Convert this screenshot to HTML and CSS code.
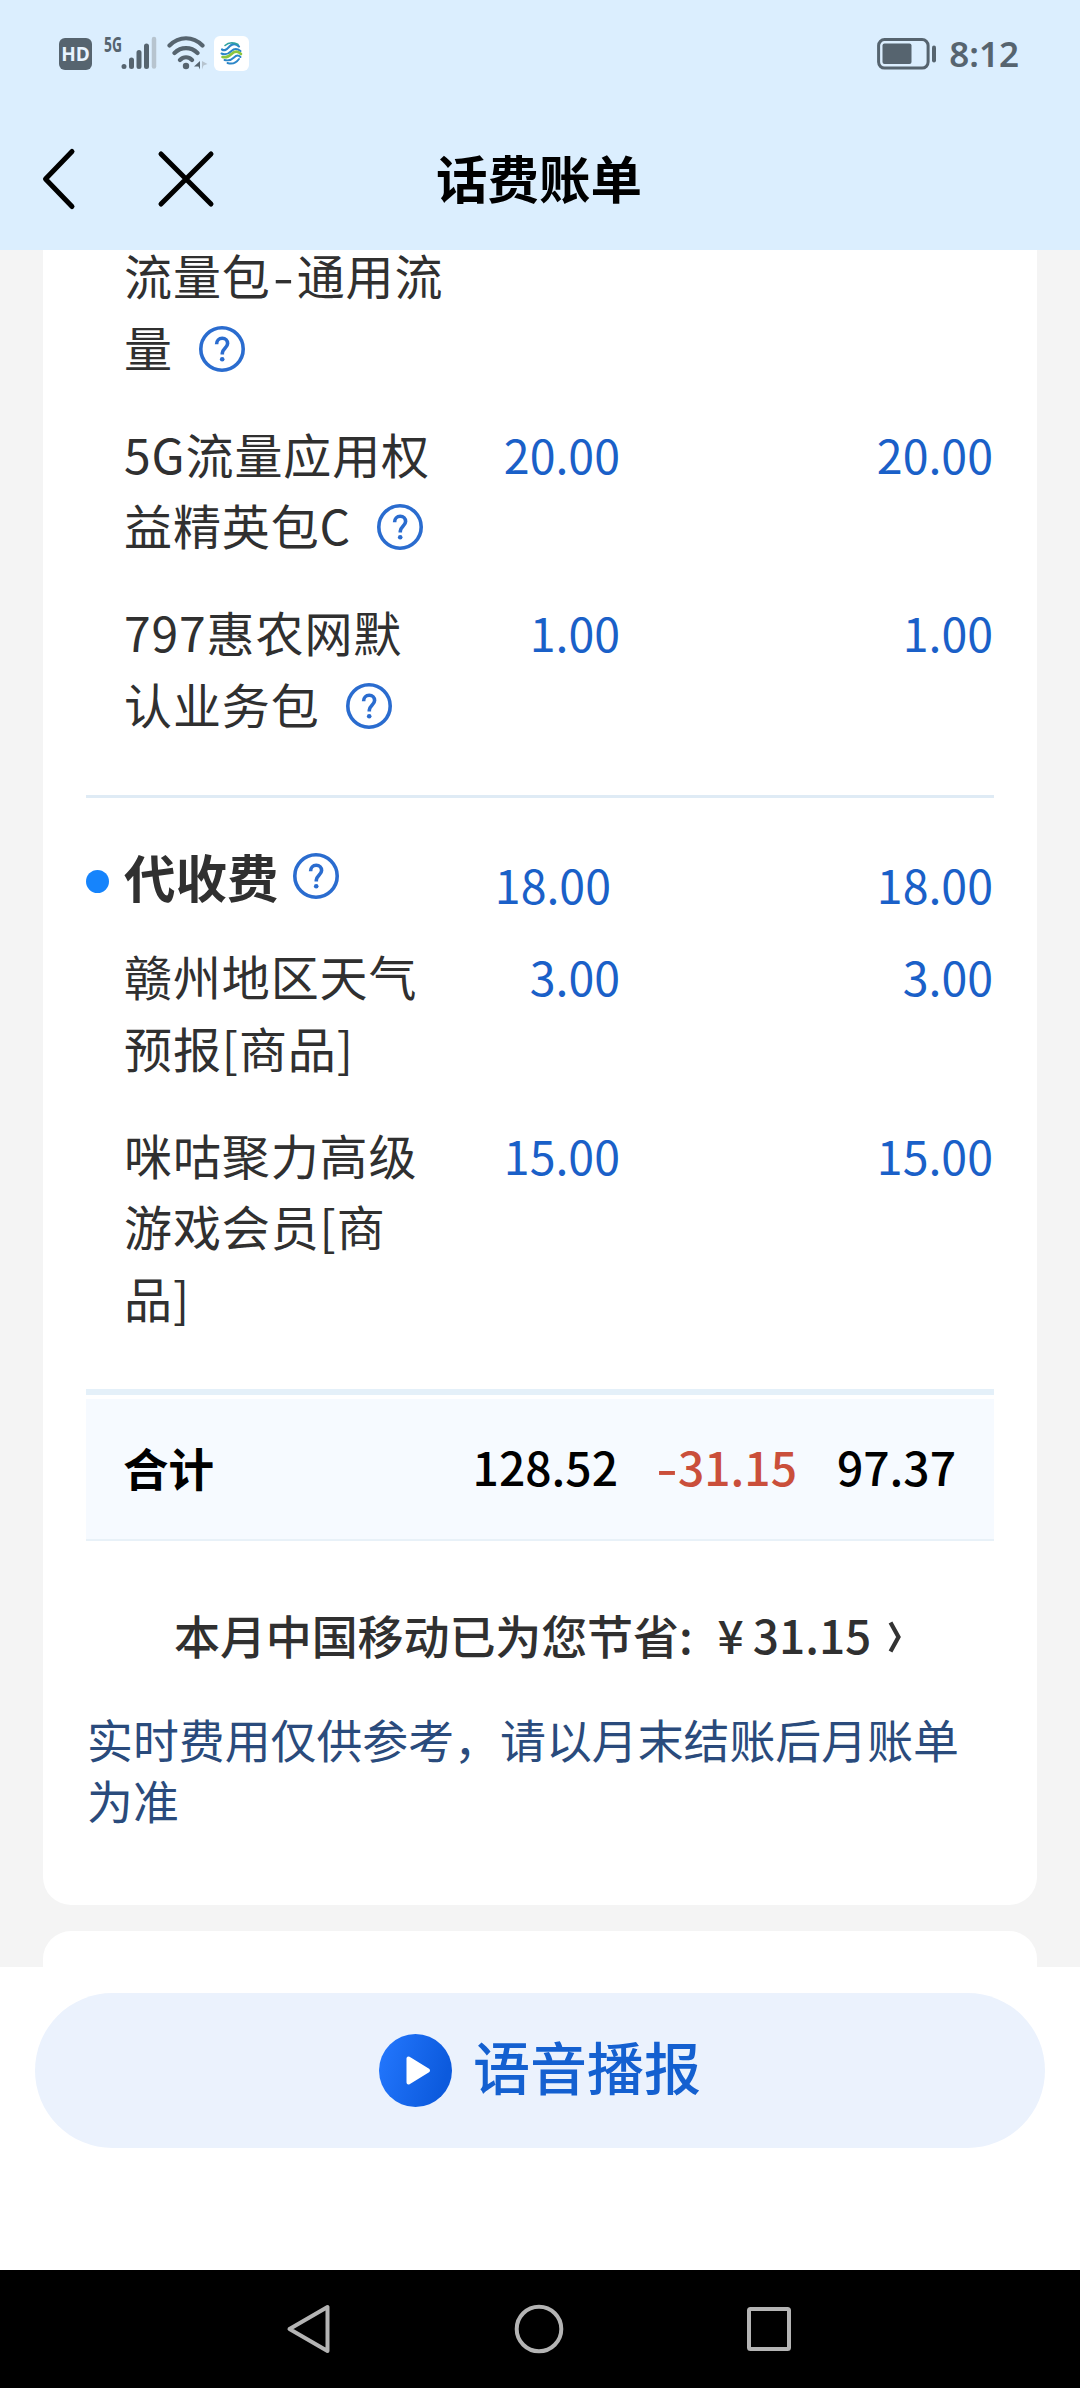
FILE: index.html
```html
<!DOCTYPE html>
<html lang="zh-CN">
<head>
<meta charset="utf-8">
<title>话费账单</title>
<link rel="stylesheet" href="styles.css">
</head>
<body>
<svg width="0" height="0" class="defs">
  <symbol id="help" viewBox="0 0 46 46">
    <circle cx="23" cy="23" r="21.200" fill="none" stroke="#2a6ccf" stroke-width="3.600"/>
    <path d="M17.600 18.200c0-3.600 2.400-5.900 5.600-5.900s5.400 2.200 5.400 5.200c0 4.400-5.300 5-5.300 9.600v1.400" fill="none" stroke="#2a6ccf" stroke-width="3.600"/>
    <circle cx="23.200" cy="33.200" r="2.300" fill="#2a6ccf"/>
  </symbol>
</svg>
<div class="screen">
  <header class="top">
    <div class="status">
      <div class="status-left">
        <span class="hd">HD</span>
        <span class="net">5G</span>
        <svg class="signal" width="36" height="34" viewBox="0 0 36 34" stroke-linecap="round" stroke-width="5" stroke="#56646f">
          <path d="M3 30.400v.1M10.500 24v6.500M18 16.500v14M25.500 10v20.500"/>
          <path d="M33 3v27.500" stroke="#b7c4cf" stroke-width="4.500"/>
        </svg>
        <svg class="wifi" width="41" height="34" viewBox="0 0 41 34" fill="none" stroke="#56646f" stroke-width="4.200" stroke-linecap="round">
          <path d="M2.500 9.500C12-.2 26-.2 35.500 9.500M7.500 17c6.500-6.500 16.500-6.500 23 0M13 24c3.500-3.500 8.500-3.500 12 0"/>
          <circle cx="19" cy="30" r="3.200" fill="#56646f" stroke="none"/>
          <path d="M33 25v8.500l-1.500-3h-4.500z" fill="#56646f" stroke="none"/>
          <path d="M35 25v8.500l1.500-4 4-1.500z" fill="#b7c4cf" stroke="none"/>
        </svg>
        <svg class="app" width="35" height="35" viewBox="0 0 35 35" fill="none" stroke-linecap="round">
          <rect width="35" height="35" rx="6" fill="#fff"/>
          <path d="M8 13.500c3 2 5-.5 8-3.500s6-2.500 9 .5" stroke="#2c86c8" stroke-width="2.200"/>
          <path d="M11 9.500c4-4 10-3 13-1" stroke="#2fa3a0" stroke-width="1.600"/>
          <path d="M7.500 17.500c4 2 7 .5 10-2.500s6-2.500 9 0" stroke="#2c86c8" stroke-width="2"/>
          <path d="M8.500 21c4 1 6 0 9-3s6.500-3 9.500 0" stroke="#8cc63f" stroke-width="2.600"/>
          <path d="M10.500 24c4 1 7 0 9.500-2.500s4.500-2.500 6.500-.5M13.500 27c5 1.500 9-.5 11.500-4" stroke="#2c86c8" stroke-width="1.900"/>
        </svg>
      </div>
      <div class="status-right">
        <svg width="60" height="32" viewBox="0 0 60 32">
          <rect x="1.600" y="1.600" width="49.500" height="28.500" rx="6" fill="none" stroke="#56646f" stroke-width="3"/>
          <rect x="5.500" y="5.500" width="29" height="20.500" rx="2" fill="#56646f"/>
          <rect x="55" y="7.500" width="4" height="17" rx="2" fill="#56646f"/>
        </svg>
        <span class="time">8:12</span>
      </div>
    </div>
    <nav class="titlebar">
      <svg class="back" width="34" height="64" viewBox="0 0 34 64" fill="none" stroke="#000" stroke-width="5" stroke-linecap="round" stroke-linejoin="round"><path d="M30 4.500 3.500 32 30 59.500"/></svg>
      <svg class="close" width="58" height="58" viewBox="0 0 58 58" fill="none" stroke="#000" stroke-width="5" stroke-linecap="round"><path d="M4 4l50 50M54 4 4 54"/></svg>
      <h1>话费账单</h1>
    </nav>
  </header>

  <main class="content">
    <section class="card bill">
      <div class="row first">
        <div class="label">流量包<span class="dash">-</span>通用流<br>量<svg class="help"><use href="#help"/></svg></div>
      </div>
      <div class="row">
        <div class="label">5G流量应用权<br>益精英包C<svg class="help"><use href="#help"/></svg></div>
        <div class="amount">20.00</div>
        <div class="amount">20.00</div>
      </div>
      <div class="row">
        <div class="label">797惠农网默<br>认业务包<svg class="help"><use href="#help"/></svg></div>
        <div class="amount">1.00</div>
        <div class="amount">1.00</div>
      </div>
      <div class="group">
        <h2><i class="dot"></i>代收费<svg class="help"><use href="#help"/></svg></h2>
        <div class="amount">18.00</div>
        <div class="amount">18.00</div>
      </div>
      <div class="row">
        <div class="label">赣州地区天气<br>预报[商品]</div>
        <div class="amount">3.00</div>
        <div class="amount">3.00</div>
      </div>
      <div class="row last">
        <div class="label">咪咕聚力高级<br>游戏会员[商<br>品]</div>
        <div class="amount">15.00</div>
        <div class="amount">15.00</div>
      </div>
      <div class="total">
        <b>合计</b>
        <span>128.52</span>
        <span class="minus"><span class="sign">-</span>31.15</span>
        <span>97.37</span>
      </div>
      <div class="saving">
        <span class="text">本月中国移动已为您节省:</span>
        <span class="yen">¥</span>
        <span class="sum">31.15</span>
        <svg width="15" height="34" viewBox="0 0 15 34" fill="none" stroke="#333" stroke-width="4.200"><path d="M2.500 2.500 10.500 17 2.500 31.500"/></svg>
      </div>
      <p class="note">实时费用仅供参考，请以月末结账后月账单<br>为准</p>
    </section>
    <section class="card next"></section>
  </main>

  <footer class="action">
    <button class="play">
      <svg width="73" height="73" viewBox="0 0 73 73">
        <defs><linearGradient id="g" x1="0" y1="0" x2="1" y2=".3"><stop offset="0" stop-color="#2478ff"/><stop offset="1" stop-color="#0c5add"/></linearGradient></defs>
        <circle cx="36.500" cy="36.500" r="36.500" fill="url(#g)"/>
        <path d="M29.500 24.500v24L49 36.500z" fill="#fff" stroke="#fff" stroke-width="4" stroke-linejoin="round"/>
      </svg>
      <span>语音播报</span>
    </button>
  </footer>

  <div class="sysnav">
    <svg width="46" height="50" viewBox="0 0 46 50"><path d="M41.500 3v44L3.500 25z"/></svg>
    <svg width="50" height="50" viewBox="0 0 50 50"><circle cx="25" cy="25" r="22.300"/></svg>
    <svg width="46" height="50" viewBox="0 0 46 50"><rect x="3" y="5" width="40" height="40" rx="1.500"/></svg>
  </div>
</div>
</body>
</html>
```
FILE: styles.css
```css
* { box-sizing: border-box; margin: 0; padding: 0; }
body {
  width: 1080px;
  background: #fff;
  color: #303030;
  font-family: "Noto Sans CJK SC", sans-serif;
}
svg { display: block; flex: none; }
.defs { position: absolute; }
.screen { display: flex; flex-direction: column; height: 2388px; }

.top { flex: none; height: 250px; background: #dbeefe; }
.status { display: flex; justify-content: space-between; align-items: flex-start; height: 108px; padding: 36px 61px 0 59px; color: #56646f; }
.status-left, .status-right { display: flex; align-items: flex-start; }
.hd {
  width: 33px; height: 32px; margin-top: 2px; border-radius: 6px;
  background: #56646f; color: #e8f4ff;
  font: 700 19px/32px "Open Sans", sans-serif; text-align: center;
}
.net { width: 17px; margin-left: 12px; font: 700 21px/16px "Open Sans", sans-serif; transform: scaleX(.66); transform-origin: 0 0; }
.wifi { margin-left: 10px; }
.app { margin-left: 6px; }
.status-right svg { margin-top: 2px; }
.time { margin-left: 12px; font: 600 35px/36px "Noto Sans", sans-serif; }

.titlebar { display: flex; align-items: center; height: 142px; padding-left: 42px; }
.close { margin-left: 81px; }
.titlebar h1 { margin: -4px 0 0 221px; color: #000; font-size: 51.5px; font-weight: 700; line-height: 72px; }

.content { flex: none; height: 1717px; padding: 0 43px; background: #f4f4f4; }
.card { background: #fff; border-radius: 28px; }
.bill { height: 1655px; padding: 0 43px; border-top-left-radius: 0; border-top-right-radius: 0; display: flow-root; }
.row, .group { display: grid; grid-template-columns: 299px 198px 1fr; padding: 0 1px 0 37px; }
.row { margin-bottom: 35.5px; line-height: 71.5px; }
.row.first { margin-top: -11px; }
.label { padding-left: 1px; font-size: 48px; letter-spacing: .9px; white-space: nowrap; }
.dash { display: inline-block; width: 26px; text-align: center; transform: scaleX(1.25); }
.help { display: inline-block; width: 46px; height: 46px; margin-left: 26px; vertical-align: -5px; }
.amount { color: #1a60c8; font-size: 46.5px; line-height: 71.5px; text-align: right; }
.group { height: 145px; margin-top: 56px; padding-left: 0; border-top: 3px solid #dfebf5; grid-template-columns: 300px 225px 1fr; }
.group h2 { display: flex; align-items: center; margin-top: 41px; height: 72px; font-size: 51.5px; font-weight: 700; white-space: nowrap; }
.dot { width: 23px; height: 23px; margin: 12px 15px 0 0; border-radius: 50%; background: #1684fc; }
.group .help { margin: 2px 0 0 14px; }
.group .amount { margin-top: 50px; }
.row.last { margin-bottom: 56px; }

.total {
  display: grid; grid-template-columns: 300px 195px 179px 1fr;
  height: 152px; padding: 37px 38px 0 37px;
  border-top: 6px solid #e4f0f9; border-bottom: 2px solid #e8f1f8;
  background: linear-gradient(#fff 4px, #f6faff 4px);
  color: #000; font-size: 46.2px; font-weight: 500; line-height: 68px; text-align: right;
}
.total b { font-size: 45.5px; font-weight: 700; text-align: left; line-height: 70px; }
.total .minus { color: #ca4f3b; }
.sign { display: inline-block; width: 22px; text-align: center; transform: scaleX(1.3); }

.saving { display: flex; align-items: center; height: 70px; margin: 58px 0 0 88px; font-size: 46px; font-weight: 500; white-space: nowrap; }
.text { letter-spacing: -.1px; }
.yen { margin-left: 25px; }
.sum { margin-left: 9px; }
.saving svg { margin: 5px 0 0 17px; }
.note { margin-top: 39px; padding-left: 1px; color: #2a4b7c; font-size: 45.9px; line-height: 61px; white-space: nowrap; }
.next { height: 36px; margin-top: 26px; border-bottom-left-radius: 0; border-bottom-right-radius: 0; }

.action { flex: none; height: 303px; padding: 26px 35px 0; }
.play {
  display: flex; align-items: center; justify-content: center; gap: 21px;
  width: 1010px; height: 155px; border: 0; border-radius: 78px;
  background: #ebf2fd; color: #1460d0;
  font: 500 57px/80px "Noto Sans CJK SC", sans-serif;
}
.play span { margin-top: -12px; }

.sysnav { flex: 1; display: flex; justify-content: center; align-items: center; gap: 182px; padding-right: 2px; background: #000; }
.sysnav svg { fill: none; stroke: #b4b4b4; stroke-width: 4; stroke-linejoin: round; }
```
